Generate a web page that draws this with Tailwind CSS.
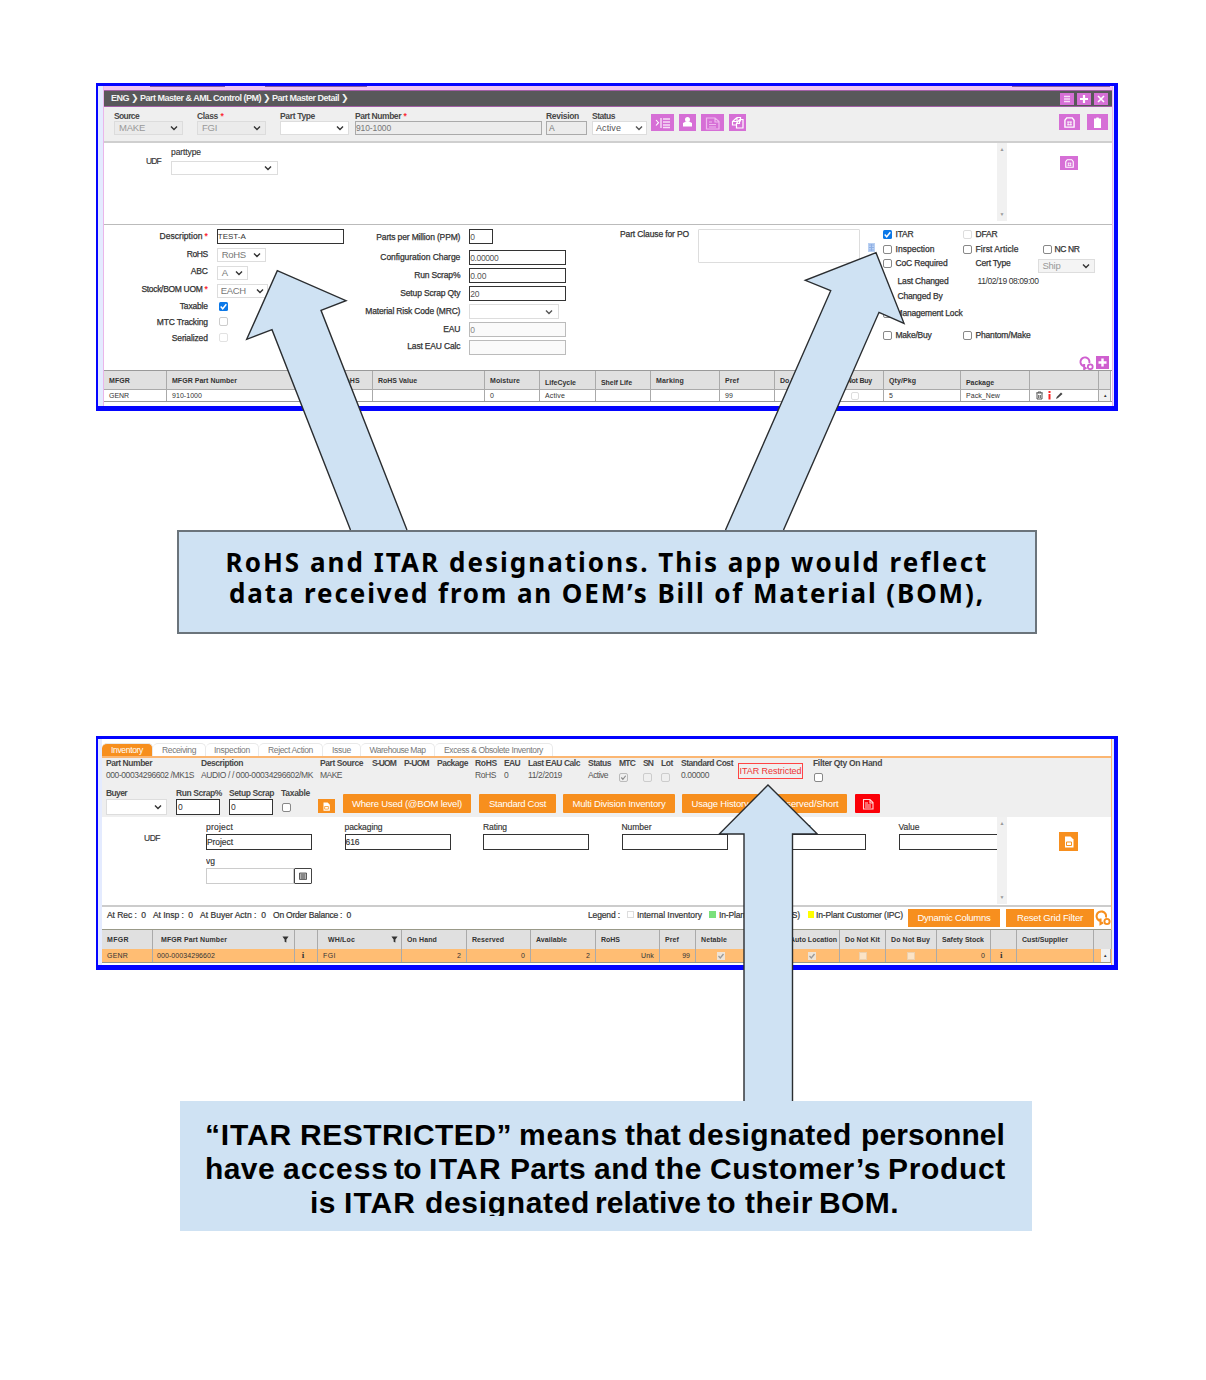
<!DOCTYPE html>
<html lang="en">
<head>
<meta charset="utf-8">
<title>RoHS and ITAR designations</title>
<script src="https://cdn.jsdelivr.net/npm/@tailwindcss/browser@4"></script>
</head>
<body class="bg-white">
<svg class="hidden">
  <symbol id="chev" viewBox="0 0 8 6"><path d="M1 1.500 4 4.500 7 1.500" fill="none" stroke="currentColor" stroke-width="1.400"/></symbol>
  <symbol id="cal" viewBox="0 0 12 12"><path d="M1 3.500 3 1h6l2 2.500V11H1z" fill="none" stroke="currentColor" stroke-width="1.500"/><path d="M3.500 5.500h5M3.500 8.500h5M4.500 5v4M7.500 5v4" stroke="currentColor" stroke-width="1" fill="none"/></symbol>
  <symbol id="file" viewBox="0 0 12 12"><path d="M2 .5h5.500L10.500 3.500V11.500H2z" fill="currentColor"/><path d="M3.500 6h5v3.500h-5z" fill="none" stroke="#f6921e" stroke-width="1"/></symbol>
  <symbol id="ring" viewBox="0 0 16 16"><path d="M5.500 11A4.800 4.800 0 1 1 11 7.500M5.500 8.500v5.500l2.500-1.500" fill="none" stroke="currentColor" stroke-width="2.100"/><circle cx="12" cy="11.500" r="2.600" fill="none" stroke="currentColor" stroke-width="1.900"/></symbol>
  <symbol id="funnel" viewBox="0 0 8 8"><path d="M.5.5h7L5 4v3.500L3 6.500V4z" fill="currentColor"/></symbol>
  <symbol id="tick" viewBox="0 0 8 8"><path d="M1.500 4 3.300 6 6.500 2" fill="none" stroke="currentColor" stroke-width="1.300"/></symbol>
</svg>

<main class="relative w-[1206px] h-[1380px] pl-24 pt-[83px] overflow-hidden font-['Liberation_Sans',sans-serif] text-[8.5px] leading-none text-[#333] whitespace-nowrap">

  <!-- Part master -->
  <section class="w-[1022px] h-[328px] border-[#0404ff] border-t-3 border-l-2 border-r-4 border-b-5 bg-[#e4ebff] pl-[5px] flex flex-col">
    <div class="grow w-[1010px] bg-white border-l border-r border-[#eab6ea] flex flex-col">
      <div class="h-1 bg-[#f0c6f0] flex shrink-0">
        <i class="w-[75px] h-px ml-[46px] bg-[#8a5a9c]"></i><i class="w-[102px] h-px ml-[40px] bg-[#8a5a9c]"></i><i class="w-[98px] h-px ml-[645px] bg-[#8a5a9c]"></i>
      </div>
      <header class="h-[17px] shrink-0 bg-[#58585a] border-y border-[#a35fa6] flex items-center pl-[7px] pr-1 text-[#f2f2f2] font-bold text-[9px]">
        <span data-w="237">ENG <span class="font-['DejaVu_Sans']">❯</span> Part Master &amp; AML Control (PM) <span class="font-['DejaVu_Sans']">❯</span> Part Master Detail <span class="font-['DejaVu_Sans']">❯</span></span>
        <div class="ml-auto flex gap-[3px]">
          <span class="w-[14px] h-3 bg-[#d66fd6]"><svg class="w-[14px] h-3" viewBox="0 0 14 12"><path d="M4 3.500h6M4 6h6M4 8.500h6" stroke="#f6dcf6" stroke-width="1.400"/></svg></span>
          <span class="w-[14px] h-3 bg-[#d66fd6]"><svg class="w-[14px] h-3" viewBox="0 0 14 12"><path d="M3 6h8M7 2v8" stroke="#fff" stroke-width="2.200"/></svg></span>
          <span class="w-[14px] h-3 bg-[#d66fd6]"><svg class="w-[14px] h-3" viewBox="0 0 14 12"><path d="m4 3 6 6M10 3 4 9" stroke="#fff" stroke-width="1.600"/></svg></span>
        </div>
      </header>
      <div class="h-[36px] shrink-0 bg-[#efefef] border-b-2 border-[#cfcfcf] flex pl-[10px] pt-1 pr-1">
        <div class="grid grid-cols-[83px_83px_75px_191px_46px_59px] grid-rows-[10px_14px] items-center [&>b]:text-[#484848]">
          <b data-w="25">Source</b><b><span data-w="21">Class</span> <span class="text-red-500">*</span></b><b data-w="35">Part Type</b><b><span data-w="46">Part Number</span> <span class="text-red-500">*</span></b><b data-w="33">Revision</b><b data-w="23">Status</b>
          <div class="w-[69px] h-[14px] border border-[#dcdcdc] bg-[#ebebeb] flex items-center justify-between px-1 text-[9.500px] text-[#999]"><span data-w="26">MAKE</span><svg class="w-2 h-1.5 text-[#333]"><use href="#chev"/></svg></div>
          <div class="w-[69px] h-[14px] border border-[#dcdcdc] bg-[#ebebeb] flex items-center justify-between px-1 text-[9.500px] text-[#999]"><span data-w="15">FGI</span><svg class="w-2 h-1.5 text-[#333]"><use href="#chev"/></svg></div>
          <div class="w-[69px] h-[14px] border border-[#ddd] bg-white flex items-center justify-end px-1"><svg class="w-2 h-1.5"><use href="#chev"/></svg></div>
          <div class="w-[187px] h-[14px] border border-[#aaa] bg-[#ececec] text-[#777] pt-[2px]"><span data-w="35">910-1000</span></div>
          <div class="w-[41px] h-[14px] border border-[#aaa] bg-[#ececec] text-[#777] pl-0.5 pt-[2px]">A</div>
          <div class="w-[55px] h-[14px] border border-[#ddd] bg-white flex items-center justify-between px-[3px] text-[9px] text-[#555]"><span data-w="25">Active</span><svg class="w-2 h-1.5"><use href="#chev"/></svg></div>
        </div>
        <div class="flex mt-[3px] gap-[4px] text-white">
          <svg class="w-[23px] h-[17px] bg-[#d66fd6]" viewBox="0 0 23 17"><path d="m5 6 2.500 2.700L5 11.500M10 4v10" fill="none" stroke="#fff" stroke-width="1.100"/><path d="M12 5h7M12 8h7M12 11h7M12 13.500h7" stroke="#f7def7" stroke-width="1.300"/></svg>
          <svg class="ml-px w-[17px] h-[17px] bg-[#d66fd6]" viewBox="0 0 17 17"><circle cx="8.500" cy="5.500" r="2.500" fill="#fff"/><path d="M4 12.500V9l3-1.500h3L13 9v3.500z" fill="#fff"/></svg>
          <svg class="w-[23px] h-[17px] ml-px bg-[#d66fd6]" viewBox="0 0 23 17"><path d="M5.500 4h8.500l4 3.500V15H5.500zM14 4v4h4M8 8h3M8 10.500h7M8 13h7" fill="none" stroke="#eeb9ee" stroke-width="1.200"/></svg>
          <svg class="w-[17px] h-[17px] ml-px bg-[#d66fd6]" viewBox="0 0 17 17"><path d="M8 3.500h3.500v4M8 3.500 3.500 7.500V11H7M8 3.500v4H3.500M10.500 5.500h3.500V14H7.500V9.500l3-4M10.500 6v3.500h-3" fill="none" stroke="#fff" stroke-width="1.200"/></svg>
        </div>
        <div class="ml-auto mt-[3px] flex gap-[7px] text-white">
          <span class="w-[21px] h-4 bg-[#d66fd6] grid place-items-center"><svg class="w-[11px] h-[11px]" viewBox="0 0 12 12"><use href="#cal"/></svg></span>
          <span class="w-[21px] h-4 bg-[#d66fd6] grid place-items-center"><svg class="w-[9px] h-[11px]" viewBox="0 0 9 11"><path d="M1 1.500h2L3.500.5h2L6 1.500h2V11H1z" fill="#fff"/></svg></span>
        </div>
      </div>
      <div class="h-[82px] shrink-0 border-b border-[#bbb] flex [-webkit-text-stroke:0.15px_#333]">
        <span class="ml-[42px] mt-[14px] w-[25px]"><span data-w="15">UDF</span></span>
        <div class="mt-[5px] flex flex-col gap-[3px]"><span class="h-[10px]"><span data-w="30">parttype</span></span>
          <div class="w-[107px] h-[14px] border border-[#ddd] flex items-center justify-end px-[5px]"><svg class="w-2 h-1.5"><use href="#chev"/></svg></div></div>
        <div class="ml-[719px] w-[10px] h-[78px] bg-[#f1f1f1] flex flex-col items-center justify-between py-1 text-[5px] text-[#999] [-webkit-text-stroke:0]"><span>▲</span><span>▼</span></div>
        <span class="ml-[53px] mt-[13px] w-[18px] h-[14px] bg-[#d66fd6] grid place-items-center text-white"><svg class="w-[9px] h-[9px]"><use href="#cal"/></svg></span>
      </div>
      <div class="h-[145px] shrink-0 flex">
        <div class="w-[104px] pt-1 grid grid-rows-[14px_22px_13px_22px_13px_18px_15px] h-[117px] items-center justify-items-end [-webkit-text-stroke:0.25px_#333]">
          <span class="flex gap-0.5"><span data-w="43">Description</span><b class="text-red-500 [-webkit-text-stroke:0]">*</b></span><span data-w="21">RoHS</span><span data-w="17">ABC</span><span class="flex gap-0.5"><span data-w="61">Stock/BOM UOM</span><b class="text-red-500 [-webkit-text-stroke:0]">*</b></span><span data-w="28">Taxable</span><span data-w="51">MTC Tracking</span><span data-w="36">Serialized</span>
        </div>
        <div class="w-[152px] pl-[9px] pt-[4px] flex flex-col gap-[3.500px] text-[9.500px] text-[#777]">
          <div class="w-[127px] h-[15px] border-[1.500px] border-[#333] pt-[3px] text-[8px] text-[#333]"><span data-w="28">TEST-A</span></div>
          <div class="w-[49px] h-[14.500px] border border-[#ddd] flex items-center justify-between px-1"><span data-w="24">RoHS</span><svg class="w-2 h-1.5 text-[#333]"><use href="#chev"/></svg></div>
          <div class="w-[31px] h-[14.500px] border border-[#ddd] flex items-center justify-between px-1"><span>A</span><svg class="w-2 h-1.5 text-[#333]"><use href="#chev"/></svg></div>
          <div class="w-[51px] h-[14.500px] border border-[#ddd] flex items-center justify-between px-[3px]"><span data-w="25">EACH</span><svg class="w-2 h-1.5 text-[#333]"><use href="#chev"/></svg></div>
          <div class="pl-0.5 flex flex-col gap-[6.500px]"><svg class="w-[9px] h-[9px] rounded-[1.500px] bg-[#0b78e8] text-white"><use href="#tick"/></svg><i class="w-[9px] h-[9px] rounded-[2px] border border-[#ccc]"></i><i class="w-[9px] h-[9px] rounded-[2px] border border-[#e2e2e2]"></i></div>
        </div>
        <div class="w-[101px] pt-[3px] grid grid-rows-[18px_22px_15px_21px_14px_22px_13px] h-[128px] items-center justify-items-end [-webkit-text-stroke:0.25px_#333]">
          <span data-w="84">Parts per Million (PPM)</span><span data-w="80">Configuration Charge</span><span data-w="46">Run Scrap%</span><span data-w="60">Setup Scrap Qty</span><span data-w="95">Material Risk Code (MRC)</span><span data-w="17">EAU</span><span data-w="53">Last EAU Calc</span>
        </div>
        <div class="w-[147px] pl-[9px] pt-[4px] flex flex-col gap-[3px] text-[#555]">
          <div class="w-6 h-[15px] mb-[3px] border-[1.500px] border-[#333] pt-[3px]">0</div>
          <div class="w-[97px] h-[15px] border-[1.500px] border-[#333] pt-[3px]"><span data-w="28">0.00000</span></div>
          <div class="w-[97px] h-[15px] border-[1.500px] border-[#333] pt-[3px]"><span data-w="16">0.00</span></div>
          <div class="w-[97px] h-[15px] border-[1.500px] border-[#333] pt-[3px]"><span data-w="9">20</span></div>
          <div class="w-[90px] h-[15px] border border-[#ddd] flex items-center justify-end px-[5px]"><svg class="w-2 h-1.5"><use href="#chev"/></svg></div>
          <div class="w-[97px] h-[15px] border border-[#bbb] bg-[#fafafa] pt-[3px] text-[#888]">0</div>
          <div class="w-[97px] h-[15px] border border-[#bbb] bg-[#fafafa]"></div>
        </div>
        <span class="ml-[13px] w-[78px] pt-[5px] [-webkit-text-stroke:0.25px_#333]"><span data-w="69">Part Clause for PO</span></span>
        <div class="mt-[4px] w-[162px] h-[34px] border border-[#ddd] rounded-[1px]"></div>
        <svg class="ml-2 mt-[18px] w-[7px] h-[9px]" viewBox="0 0 7 9"><path d="M0 0h7v9H0z" fill="#b9d0f2"/><path d="M1 2h5M1 4.500h5M1 7h5M3.500 1v7" stroke="#8fb0e4"/></svg>
        <div class="ml-[8px] mt-[2px] w-[230px]">
          <div class="grid grid-cols-[13px_67px_13px_67px_12px_40px] grid-rows-[15px_14px_15px_21px_8px_26px_19px] items-center [-webkit-text-stroke:0.25px_#333]">
            <svg class="w-[9px] h-[9px] rounded-[1.500px] bg-[#0b78e8] text-white"><use href="#tick"/></svg><span data-w="18">ITAR</span><i class="w-[9px] h-[9px] rounded-[2px] border border-[#ddd]"></i><span data-w="22">DFAR</span><span></span><span></span>
            <i class="w-[9px] h-[9px] rounded-[2px] border border-[#888]"></i><span data-w="39">Inspection</span><i class="w-[9px] h-[9px] rounded-[2px] border border-[#888]"></i><span data-w="43">First Article</span><i class="w-[9px] h-[9px] rounded-[2px] border border-[#888]"></i><span data-w="25">NC NR</span>
            <i class="w-[9px] h-[9px] rounded-[2px] border border-[#888]"></i><span data-w="52">CoC Required</span><span></span><span data-w="35">Cert Type</span>
            <div class="col-span-2 -ml-[5px] mt-[5px] w-[57px] h-[14px] border border-[#ddd] bg-[#f4f4f4] flex items-center justify-between px-1 text-[9.500px] text-[#999] [-webkit-text-stroke:0]"><span data-w="18">Ship</span><svg class="w-2 h-1.5 text-[#333]"><use href="#chev"/></svg></div>
            <span></span><span class="pl-[2px]"><span data-w="51">Last Changed</span></span><span></span><span class="pl-[2px] [-webkit-text-stroke:0]"><span data-w="61">11/02/19 08:09:00</span></span><span></span><span></span>
            <span></span><span class="col-span-5 pl-[2px]"><span data-w="45">Changed By</span></span>
            <i class="w-[9px] h-[9px] rounded-[2px] border border-[#888]"></i><span class="col-span-5"><span data-w="67">Management Lock</span></span>
            <i class="w-[9px] h-[9px] rounded-[2px] border border-[#888]"></i><span data-w="36">Make/Buy</span><i class="w-[9px] h-[9px] rounded-[2px] border border-[#888]"></i><span data-w="55">Phantom/Make</span><span></span><span></span>
          </div>
          <div class="flex justify-end gap-[2px] pt-[11px] pr-[3px] text-[#cf5fcf]"><svg class="w-[15px] h-[15px]" viewBox="0 0 16 16"><use href="#ring"/></svg><svg class="w-[13px] h-[13px] bg-[#cf5fcf]" viewBox="0 0 13 13"><path d="M2.500 6.500h8M6.500 2.500v8" stroke="#fff" stroke-width="2.400"/></svg></div>
        </div>
      </div>
      <div class="grid grid-cols-[63px_168px_38px_112px_55px_56px_55px_69px_55px_56px_53px_77px_69px_69px_12px] grid-rows-[19px_11px] border-t border-b border-[#999] text-[7px] font-bold [&>*]:border-r [&>*]:border-[#aaa] [&>*]:flex [&>*]:items-center [&>*]:pl-[5px] [&>*:nth-child(-n+15)]:bg-[#e0e0e0] [&>*:nth-child(-n+15)]:border-b [&>*:nth-child(n+16)]:font-normal">
        <div><span data-w="21">MFGR</span></div><div><span data-w="65">MFGR Part Number</span></div><div><span data-w="20">RoHS</span></div><div><span data-w="39">RoHS Value</span></div><div><span data-w="30">Moisture</span></div><div class="pt-1"><span data-w="31">LifeCycle</span></div><div class="pt-1"><span data-w="31">Shelf Life</span></div><div><span data-w="28">Marking</span></div><div><span data-w="14">Pref</span></div><div><span data-w="34">Do Not Kit</span></div><div><span data-w="36">Do Not Buy</span></div><div><span data-w="27">Qty/Pkg</span></div><div class="pt-1"><span data-w="28">Package</span></div><div></div><div></div>
        <div><span data-w="20">GENR</span></div><div><span data-w="30">910-1000</span></div><div></div><div></div><div>0</div><div><span data-w="20">Active</span></div><div></div><div></div><div>99</div><div></div><div><i class="ml-[15px] w-2 h-2 border border-[#ddd] rounded-[2px]"></i></div><div>5</div><div><span data-w="34">Pack_New</span></div>
        <div><svg class="w-[30px] h-[9px]" viewBox="0 0 30 9"><path d="M1 2h7M3 2V1h3v1M2 2.500V8h5V2.500M3.700 4v3M5.300 4v3" stroke="#444" fill="none" stroke-width=".9"/><path d="M14.500 0v2M14.500 3v5.500" stroke="#f22" stroke-width="2"/><path d="m21 8 .7-2L26 1.500 27.500 3 23 7z" fill="#444"/></svg></div><div class="bg-[#f1f1f1] text-[5px]">▴</div>
      </div>
    </div>
  </section>

  <!-- RoHS and ITAR note -->
  <div class="ml-[81px] mt-[119px] w-[860px] h-[104px] border-2 border-[#6b747b] bg-[#cfe2f3] pt-[15px] text-center font-['Noto_Sans',sans-serif] font-bold text-[26px] leading-[31px] text-black">
    <p><span data-w="763">RoHS and ITAR designations. This app would reflect</span></p>
    <p><span data-w="756">data received from an OEM’s Bill of Material (BOM),</span></p>
  </div>

  <!-- Inventory -->
  <section class="mt-[102px] w-[1022px] h-[234px] border-[#0404ff] border-t-3 border-l-2 border-r-4 border-b-5 bg-[#e4ebff] pl-1">
    <div class="w-[1010px] h-[226px] bg-white border-r border-[#fbb672] flex flex-col">
      <nav class="h-[17px] shrink-0 flex items-end pt-1 text-[8.500px] text-[#777] [&>*]:h-[13px] [&>*]:flex [&>*]:items-center [&>*]:justify-center [&>*]:rounded-t-[5px] [&>*]:border-r [&>*]:border-t [&>*]:border-[#e9e9e9]">
        <div class="w-[51px] bg-[#f78f1e] text-white"><span data-w="32">Inventory</span></div><div class="w-[53px]"><span data-w="34">Receiving</span></div><div class="w-[53px]"><span data-w="36">Inspection</span></div><div class="w-[64px]"><span data-w="45">Reject Action</span></div><div class="w-[38px]"><span data-w="19">Issue</span></div><div class="w-[74px]"><span data-w="56">Warehouse Map</span></div><div class="w-[118px]"><span data-w="99">Excess &amp; Obsolete Inventory</span></div>
      </nav>
      <div class="h-[61px] shrink-0 bg-[#efefef] border-t-2 border-[#fbb672] pl-1">
        <div class="h-[28px] grid grid-cols-[95px_119px_52px_32px_33px_38px_29px_24px_60px_31px_24px_18px_20px_57px_75px_70px] grid-rows-[11px_13px] items-center text-[#555] [&>b]:text-[#484848]">
          <b data-w="46">Part Number</b><b data-w="42">Description</b><b data-w="43">Part Source</b><b data-w="24">S-UOM</b><b data-w="25">P-UOM</b><b data-w="31">Package</b><b data-w="22">RoHS</b><b data-w="16">EAU</b><b data-w="52">Last EAU Calc</b><b data-w="23">Status</b><b data-w="16">MTC</b><b data-w="10">SN</b><b data-w="12">Lot</b><b data-w="52">Standard Cost</b>
          <div class="row-span-2 mt-[2px] w-[65px] h-4 border border-[#f44] text-[#e33] text-[9px] grid place-items-center"><span data-w="62">ITAR Restricted</span></div><b data-w="69">Filter Qty On Hand</b>
          <span data-w="88">000-00034296602 /MK1S</span><span data-w="112">AUDIO / / 000-00034296602/MK</span><span data-w="22">MAKE</span><span></span><span></span><span></span><span data-w="21">RoHS</span><span>0</span><span data-w="34">11/2/2019</span><span data-w="20">Active</span>
          <svg class="w-[9px] h-[9px] mt-1 rounded-[2px] border border-[#bbb] bg-[#eee] text-[#888]"><use href="#tick"/></svg><i class="mt-1 w-[9px] h-[9px] rounded-[2px] border border-[#ccc]"></i><i class="mt-1 w-[9px] h-[9px] rounded-[2px] border border-[#ccc]"></i><span data-w="28">0.00000</span><i class="mt-1 ml-px w-[9px] h-[9px] rounded-[2px] border border-[#888] bg-white"></i>
        </div>
        <div class="h-[30px] flex">
          <div class="w-[212px] grid grid-cols-[70px_53px_52px_37px] grid-rows-[12px_16px] items-center [&>b]:text-[#484848] pt-[1px]">
            <b data-w="21">Buyer</b><b data-w="46">Run Scrap%</b><b data-w="45">Setup Scrap</b><b data-w="29">Taxable</b>
            <div class="w-[61px] h-4 bg-white border border-[#ddd] flex items-center justify-end px-1"><svg class="w-2 h-1.5"><use href="#chev"/></svg></div><div class="w-11 h-4 bg-white border-[1.500px] border-[#333] pt-[3px] pl-px">0</div><div class="w-11 h-4 bg-white border-[1.500px] border-[#333] pt-[3px] pl-px">0</div><i class="ml-px w-[9px] h-[9px] rounded-[2px] border border-[#888] bg-white"></i>
          </div>
          <span class="mt-[13px] w-[17px] h-[14px] bg-[#f78f1e] text-white grid place-items-center"><svg class="w-[9px] h-[9px]"><use href="#file"/></svg></span>
          <div class="ml-2 mt-2 flex gap-2 h-[19px] text-[9.500px] text-white [&>*]:bg-[#f78f1e] [&>*]:grid [&>*]:place-items-center [&>*]:rounded-[1px]">
            <div class="w-[128px]"><span data-w="110">Where Used (@BOM level)</span></div><div class="w-[77px]"><span data-w="57">Standard Cost</span></div><div class="w-[112px] -ml-px"><span data-w="93">Multi Division Inventory</span></div><div class="w-[76px] -ml-px"><span data-w="57">Usage History</span></div><div class="w-[81px]"><span data-w="64">Reserved/Short</span></div>
            <div class="w-[25px] !bg-[#fb0007]"><svg class="w-3 h-3" viewBox="0 0 12 12"><path d="M1.500 1.500h6.500l3 3V11H1.500zM8 1.500V5h3M3 5h3M3 7h6M3 9h6" fill="none" stroke="#ffd6d6" stroke-width="1.100"/></svg></div>
          </div>
        </div>
      </div>
      <div class="h-[90px] shrink-0 border-b-2 border-[#ccc] flex">
        <span class="ml-[42px] mt-[17px] w-[62px] [-webkit-text-stroke:0.15px_#333]"><span data-w="16">UDF</span></span>
        <div class="w-[791px] overflow-hidden grid grid-cols-[138.500px_138.500px_138.500px_138.500px_138.500px_107px] grid-rows-[11px_17px_19px_17px] pt-[5px] items-center content-start [-webkit-text-stroke:0.15px_#333]">
          <span data-w="27">project</span><span data-w="38">packaging</span><span data-w="24">Rating</span><span data-w="30">Number</span><span data-w="51">Components</span><span data-w="21">Value</span>
          <div class="w-[106px] h-4 border-[1.500px] border-[#333] pt-[3px]"><span data-w="26">Project</span></div><div class="w-[106px] h-4 border-[1.500px] border-[#333] pt-[3px]"><span data-w="14">616</span></div><div class="w-[106px] h-4 border-[1.500px] border-[#333]"></div><div class="w-[106px] h-4 border-[1.500px] border-[#333]"></div><div class="w-[106px] h-4 border-[1.500px] border-[#333]"></div><div class="w-[106px] h-4 border-[1.500px] border-[#333]"></div>
          <span class="col-span-6 pt-[4px]"><span data-w="9">vg</span></span>
          <div class="flex -mt-[3px]"><i class="w-[88px] h-4 border border-[#ccc]"></i><span class="w-[18px] h-4 border-[1.500px] border-[#444] rounded-[1px] grid place-items-center"><svg class="w-2 h-2" viewBox="0 0 8 8"><path d="M.5 1h7v6.500h-7zM0 2h8M0 4h8M0 6h8M3 2v5M5 2v5" stroke="#444" stroke-width=".8" fill="none"/></svg></span></div>
        </div>
        <div class="w-[10px] h-[87px] bg-[#f1f1f1] flex flex-col items-center justify-between py-1 text-[5px] text-[#999]"><span>▲</span><span>▼</span></div>
        <span class="ml-[52px] mt-[15px] w-[19px] h-[19px] bg-[#f78f1e] text-white grid place-items-center"><svg class="w-3 h-3"><use href="#file"/></svg></span>
      </div>
      <div class="h-[22px] shrink-0 flex">
        <div class="w-[481px] pl-[5px] pt-[4px] flex gap-[7px] [-webkit-text-stroke:0.2px_#333]"><span data-w="39">At Rec :&nbsp; 0</span><span data-w="40">At Insp :&nbsp; 0</span><span data-w="66">At Buyer Actn :&nbsp; 0</span><span data-w="78">On Order Balance :&nbsp; 0</span></div>
        <div class="w-[325px] pt-[4px] flex pl-[5px] [-webkit-text-stroke:0.2px_#333]"><span data-w="32">Legend :</span><i class="ml-[7px] w-[7px] h-[7px] border border-[#ddd]"></i><span class="ml-[3px]" data-w="65">Internal Inventory</span><i class="ml-[7px] w-[7px] h-[7px] bg-[#7be07b]"></i><span class="ml-[3px]" data-w="81">In-Plant Supplier (IPS)</span><i class="ml-[8px] w-[6px] h-[7px] bg-[#ff0]"></i><span class="ml-[2px]" data-w="87">In-Plant Customer (IPC)</span></div>
        <div class="mt-[2px] h-[18px] flex gap-[6px] text-[9.500px] text-white"><div class="w-[92px] bg-[#f78f1e] grid place-items-center"><span data-w="73">Dynamic Columns</span></div><div class="w-[88px] bg-[#f78f1e] grid place-items-center"><span data-w="66">Reset Grid Filter</span></div></div>
        <svg class="ml-px mt-[3px] w-4 h-4 text-[#f78f1e]" viewBox="0 0 16 16"><use href="#ring"/></svg>
      </div>
      <div class="grid grid-cols-[51px_142px_23px_84px_65px_64px_65px_64px_36px_50px_39px_55px_46px_51px_54px_26px_77px_7px_10px] grid-rows-[19px_13px] border-b border-t border-[#998] text-[7px] font-bold [&>*]:border-r [&>*]:border-[#aaa] [&>*]:flex [&>*]:items-center [&>*]:px-[5px] [&>*:nth-child(-n+19)]:bg-[#e0e0e0] [&>*:nth-child(n+20)]:bg-[#ffbd73] [&>*:nth-child(n+20)]:font-normal">
        <div><span data-w="22">MFGR</span></div><div class="justify-between"><span class="ml-[3px]" data-w="66">MFGR Part Number</span><svg class="w-[7px] h-[7px]"><use href="#funnel"/></svg></div><div></div><div class="justify-between"><span class="ml-[5px]" data-w="27">WH/Loc</span><svg class="w-[7px] h-[7px] -mr-0.5"><use href="#funnel"/></svg></div><div><span data-w="30">On Hand</span></div><div><span data-w="32">Reserved</span></div><div><span data-w="31">Available</span></div><div><span data-w="19">RoHS</span></div><div><span data-w="14">Pref</span></div><div><span data-w="26">Netable</span></div><div></div><div><span data-w="47">Auto Location</span></div><div><span data-w="35">Do Not Kit</span></div><div><span data-w="39">Do Not Buy</span></div><div><span data-w="42">Safety Stock</span></div><div></div><div><span data-w="46">Cust/Supplier</span></div><div></div><div></div>
        <div><span data-w="21">GENR</span></div><div class="pl-1!"><span data-w="58">000-00034296602</span></div><div class="px-0! justify-center font-bold! font-['Liberation_Serif'] text-[9px]"><span class="-ml-1.5">i</span></div><div><span data-w="13">FGI</span></div><div class="justify-end">2</div><div class="justify-end">0</div><div class="justify-end">2</div><div class="justify-end"><span data-w="13">Unk</span></div><div class="justify-end">99</div><div class="justify-center"><svg class="w-2 h-2 bg-[#eee3d5] text-[#999]"><use href="#tick"/></svg></div><div></div><div class="justify-center"><svg class="w-2 h-2 bg-[#eee3d5] text-[#999]"><use href="#tick"/></svg></div><div class="justify-center"><i class="w-2 h-2 bg-[#fbe3c6] border border-[#ecd0ae]"></i></div><div class="justify-center"><i class="w-2 h-2 bg-[#fbe3c6] border border-[#ecd0ae]"></i></div><div class="justify-end">0</div><div class="pl-[9px]! font-bold! font-['Liberation_Serif'] text-[9px]">i</div><div></div><div></div><div class="bg-[#f1f1f1]! px-[3px]! text-[5px]">▴</div>
      </div>
    </div>
  </section>

  <!-- ITAR restricted note -->
  <div class="ml-[84px] mt-[131px] w-[852px] h-[130px] bg-[#cfe2f3] pt-[17px] font-bold text-[30px] leading-[34px] text-black">
    <p class="flex pl-[25px]"><span data-w="87">“ITAR</span><span class="ml-2" data-w="212">RESTRICTED”</span><span class="ml-[7px]" data-w="99">means</span><span class="ml-[7px]" data-w="56">that</span><span class="ml-[7px]" data-w="164">designated</span><span class="ml-[9px]" data-w="144">personnel</span></p>
    <p class="flex pl-[25px]"><span data-w="70">have</span><span class="ml-[8px]" data-w="106">access</span><span class="ml-[5px]" data-w="27">to</span><span class="ml-[8px]" data-w="73">ITAR</span><span class="ml-[8px]" data-w="76">Parts</span><span class="ml-[8px]" data-w="55">and</span><span class="ml-[6px]" data-w="47">the</span><span class="ml-[8px]" data-w="171">Customer’s</span><span class="ml-[7px]" data-w="118">Product</span></p>
    <p class="flex pl-[130px] h-[30px] overflow-hidden"><span data-w="26">is</span><span class="ml-[8px]" data-w="72">ITAR</span><span class="ml-[9px]" data-w="165">designated</span><span class="ml-[5px]" data-w="106">relative</span><span class="ml-[6px]" data-w="29">to</span><span class="ml-[9px]" data-w="68">their</span><span class="ml-[6px]" data-w="80">BOM.</span></p>
  </div>

  <!-- Callout arrows -->
  <svg class="absolute left-0 top-0 w-[1206px] h-[1380px]" viewBox="0 0 1206 1380" fill="#cfe2f3" stroke="#2a2d30" stroke-width="1.400">
    <path d="M350.500 530 272 329.700 246.700 339.300 277.300 270.700 346 300.700 321 310.300 407 530"/>
    <path d="M725.500 530 830.700 290.700 805.300 280.300 876 252.700 904 323.300 879 312.300 783.500 530"/>
    <path d="M744 1101V834H719.300L768 785 817.300 834H792.500V1101"/>
  </svg>
</main>
<script>
  function fit() {
    document.querySelectorAll('[data-w]').forEach(el => {
      const w = +el.dataset.w;
      el.style.display = 'inline-block';
      el.style.flexShrink = 0;
      el.style.width = 'max-content';
      el.style.letterSpacing = '0px';
      const natural = el.getBoundingClientRect().width;
      el.style.letterSpacing = ((w - natural) / el.textContent.length) + 'px';
      el.style.width = w + 'px';
    });
  }
  fit();
  window.addEventListener('load', fit);
  document.fonts.ready.then(fit);
  requestAnimationFrame(() => requestAnimationFrame(fit));
  setTimeout(fit, 60);
</script>
</body>
</html>
